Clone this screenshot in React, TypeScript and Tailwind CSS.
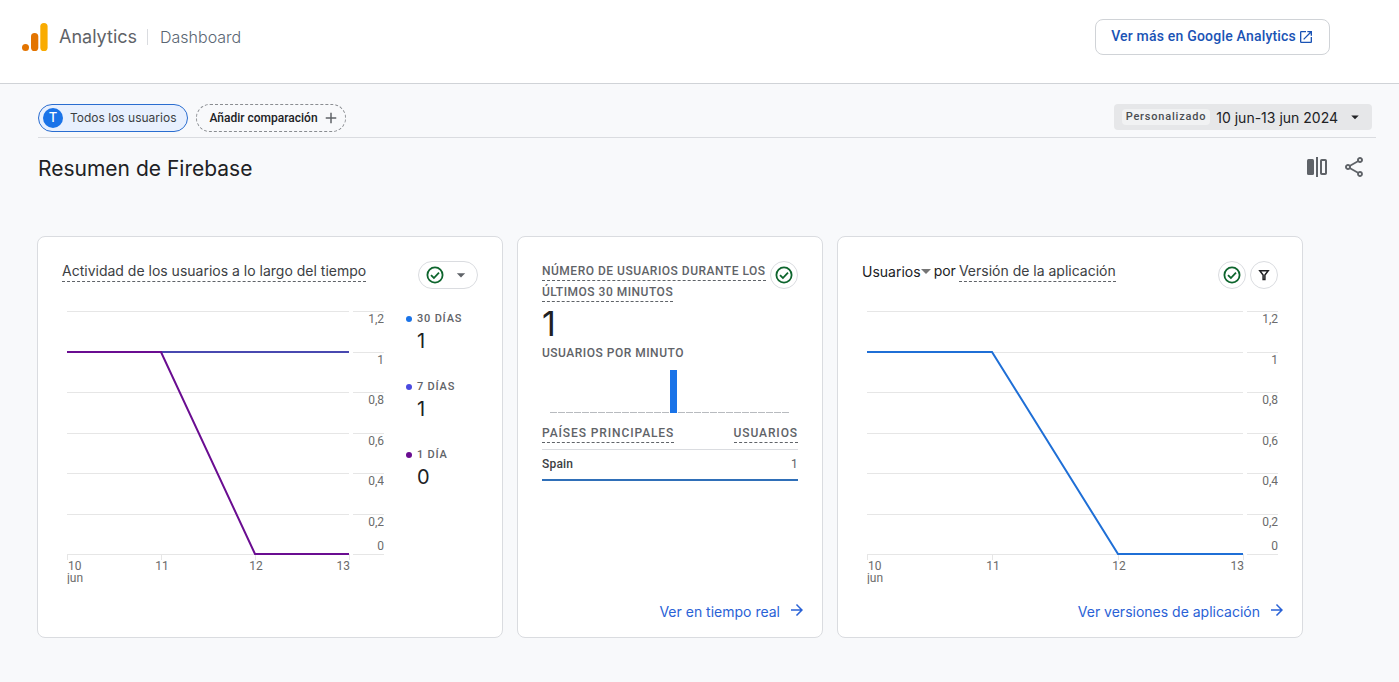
import type { ReactNode } from "react";
import { MdAdd, MdArrowDropDown, MdArrowForward, MdOpenInNew, MdOutlineShare } from "react-icons/md";

type Series = { color: string; values: number[] };

const X_LABELS = ["10", "11", "12", "13"];
const Y_TICKS = [
  { y: 7, label: "1,2", textY: 19 },
  { y: 48, label: "1", textY: 60 },
  { y: 88, label: "0,8", textY: 100 },
  { y: 129, label: "0,6", textY: 141 },
  { y: 169, label: "0,4", textY: 181 },
  { y: 210, label: "0,2", textY: 222 },
  { y: 250, label: "0", textY: 246 },
];

function LineChart({ width, series, label }: { width: number; series: Series[]; label: string }) {
  const left = 5;
  const right = width - 35;
  const xAt = (i: number) => left + Math.round(((right - left) * i) / (X_LABELS.length - 1));
  const yAt = (v: number) => 250 - v * 202;

  return (
    <svg viewBox={`0 0 ${width} 280`} role="img" aria-label={label} className="block h-auto w-full font-[Roboto,sans-serif] text-[12px]">
      <g stroke="#e6e6e6" strokeWidth="1">
        {Y_TICKS.map((t) => (
          <path key={t.y} d={`M${left} ${t.y + 0.5}H${right}M${right + 4} ${t.y + 0.5}H${width}`} />
        ))}
        {X_LABELS.map((x, i) => (
          <path key={x} d={`M${xAt(i) + 0.5} 250v6`} />
        ))}
      </g>
      <g fill="#6b6b6b">
        {Y_TICKS.map((t) => (
          <text key={t.y} x={width} y={t.textY} textAnchor="end">
            {t.label}
          </text>
        ))}
        <text x={left + 1} y="266">10</text>
        <text x={left} y="278">jun</text>
        <text x={xAt(1) + 1} y="266" textAnchor="middle">11</text>
        <text x={xAt(2) + 1} y="266" textAnchor="middle">12</text>
        <text x={right + 1} y="266" textAnchor="end">13</text>
      </g>
      {series.map((s) => (
        <polyline
          key={s.color}
          fill="none"
          stroke={s.color}
          strokeWidth="2"
          points={s.values.map((v, i) => `${xAt(i)},${yAt(v)}`).join(" ")}
        />
      ))}
    </svg>
  );
}

function CheckIcon() {
  return (
    <svg viewBox="0 0 18 18" className="size-[18px]" fill="none" stroke="#0d652d" strokeWidth="1.8" aria-hidden="true">
      <circle cx="9" cy="9" r="7.6" />
      <path d="M5 9.2l2.9 2.8L13 6.600" />
    </svg>
  );
}

function RoundButton({ label, children }: { label: string; children: ReactNode }) {
  return (
    <button type="button" aria-label={label} className="flex size-7 shrink-0 items-center justify-center rounded-full border border-[#dadce0]">
      {children}
    </button>
  );
}

function Card({ children }: { children: ReactNode }) {
  return (
    <section className="flex min-h-[402px] flex-col rounded-lg border border-[#dadce0] bg-white px-6 pt-6 pb-3.5">{children}</section>
  );
}

function CardLink({ children }: { children: ReactNode }) {
  return (
    <a href="#" className="-mr-2 mt-auto flex items-start gap-2 self-end text-[14px] leading-[22px] text-[#2a62d6]">
      {children}
      <MdArrowForward className="size-[18px]" aria-hidden="true" />
    </a>
  );
}

const LEGEND = [
  { name: "30 DÍAS", value: "1", dot: "bg-[#1a73e8]" },
  { name: "7 DÍAS", value: "1", dot: "bg-[#4a4ae0]" },
  { name: "1 DÍA", value: "0", dot: "bg-[#6a0d91]" },
];

export default function App() {
  return (
    <div className="min-h-screen bg-[#f8f9fb] font-[Inter,sans-serif] text-[#202124]">
      <header className="flex h-21 items-center justify-between border-b border-[#d0d3d7] bg-white pb-2.5 pl-[22px] pr-[69px]">
        <div className="flex items-center">
          <svg viewBox="0 0 26 28" className="h-7 w-[26px]" aria-hidden="true">
            <circle cx="3.500" cy="24.500" r="3.500" fill="#e37400" />
            <rect x="9" y="10" width="7.300" height="18" rx="3.600" fill="#e37400" />
            <rect x="18.300" y="0" width="7.300" height="28" rx="3.600" fill="#f9ab00" />
          </svg>
          <span className="ml-[11px] text-[18px] leading-none text-[#5f6368]">Analytics</span>
          <span className="ml-2.5 mr-3 h-4 w-px bg-[#dadce0]" />
          <span className="text-[16px] leading-none font-light text-[#5a6673]">Dashboard</span>
        </div>
        <a href="#" className="flex h-9 items-center gap-0.5 rounded-lg border border-[#d0d3d7] px-[15px] font-[Roboto,sans-serif] text-[14px] font-medium tracking-[0.2px] text-[#1a53b5]">
          Ver más en Google Analytics
          <MdOpenInNew className="size-4" aria-hidden="true" />
        </a>
      </header>

      <main className="pb-11 pl-[37px] pr-[23px] pt-5">
        <div className="ml-px flex items-start justify-between border-b border-[#dadce0] pb-[5px]">
          <div className="flex gap-2">
            <button type="button" className="flex h-7 items-center gap-[7px] rounded-full border border-[#2a6dd0] bg-[#e8f0fe] pl-1 pr-[11px] text-[12px] text-[#3c4043]">
              <span className="flex size-5 items-center justify-center rounded-full bg-[#1a73e8] text-[13px] font-medium text-white">T</span>
              Todos los usuarios
            </button>
            <button type="button" className="flex h-7 items-center gap-1 rounded-full border border-dashed border-[#8a8d91] pl-3 pr-[5px] font-[Roboto,sans-serif] text-[12px] font-medium text-[#202124]">
              Añadir comparación
              <MdAdd className="size-[18px] text-[#5f6368]" aria-hidden="true" />
            </button>
          </div>
          <button type="button" className="mr-1 flex h-[26px] items-center rounded bg-[#e6e7e9] px-2 text-[14px]">
            <span className="mr-1.5 rounded-sm bg-[#f1f2f3] px-1 font-[Roboto,sans-serif] text-[11px] leading-4 font-medium tracking-[0.8px] text-[#4a4d51]">
              Personalizado
            </span>
            10 jun-13 jun 2024
            <MdArrowDropDown className="ml-2 size-[18px]" aria-hidden="true" />
          </button>
        </div>

        <div className="ml-px flex items-center justify-between pr-2.5 pt-[11px]">
          <h1 className="text-[21px] leading-10">Resumen de Firebase</h1>
          <div className="flex items-center gap-3.5 pb-1 text-[#5f6368]">
            <button type="button" aria-label="Comparar">
              <svg viewBox="0 0 22 20" className="h-5 w-[22px]" fill="none" aria-hidden="true">
                <rect x="1" y="2" width="7" height="16" rx="1.500" fill="currentColor" />
                <path d="M11 0v20" stroke="currentColor" strokeWidth="2" />
                <rect x="15" y="3" width="5" height="14" rx="0.800" stroke="currentColor" strokeWidth="2" />
              </svg>
            </button>
            <button type="button" aria-label="Compartir">
              <MdOutlineShare className="size-6" />
            </button>
          </div>
        </div>

        <div className="mt-[47px] grid max-w-[1266px] grid-cols-[466fr_306fr_466fr] gap-3.5">
          <Card>
            <div className="flex items-start justify-between">
              <h2 className="border-b border-dashed border-[#5f6368] text-[14px] leading-5 text-[#3c4043]">Actividad de los usuarios a lo largo del tiempo</h2>
              <button type="button" aria-label="Estado de los datos" className="flex h-7 w-15 items-center justify-between rounded-full border border-[#dadce0] pl-[7px] pr-1.5 text-[#5f6368]">
                <CheckIcon />
                <MdArrowDropDown className="size-5" aria-hidden="true" />
              </button>
            </div>
            <div className="mt-[15px] flex">
              <div className="min-w-0 flex-1">
                <LineChart
                  width={322}
                  label="Actividad de los usuarios"
                  series={[
                    { color: "#4848b0", values: [1, 1, 1, 1] },
                    { color: "#6a0d91", values: [1, 1, 0, 0] },
                  ]}
                />
              </div>
              <ul className="w-[94px] shrink-0 pl-[22px] pt-[7px]">
                {LEGEND.map((item) => (
                  <li key={item.name} className="h-17">
                    <div className="flex items-center gap-[5px] font-[Roboto,sans-serif] text-[11px] leading-4 font-medium tracking-[0.8px] text-[#5f6368]">
                      <span className={`size-1.5 rounded-full ${item.dot}`} />
                      {item.name}
                    </div>
                    <div className="pl-[11px] text-[20px] leading-7">{item.value}</div>
                  </li>
                ))}
              </ul>
            </div>
          </Card>

          <Card>
            <div className="flex items-start justify-between gap-1 font-[Roboto,sans-serif] text-[12px] font-medium tracking-[0.5px] text-[#5f6368]">
              <h2 className="leading-[21px]">
                <span className="border-b border-dashed border-[#5f6368] pb-0.5">NÚMERO DE USUARIOS DURANTE LOS ÚLTIMOS 30 MINUTOS</span>
              </h2>
              <RoundButton label="Estado de los datos">
                <CheckIcon />
              </RoundButton>
            </div>
            <div className="pb-px text-[34px] leading-[42px]">1</div>
            <h3 className="font-[Roboto,sans-serif] text-[12px] leading-[14px] font-medium tracking-[0.5px] text-[#5f6368]">USUARIOS POR MINUTO</h3>
            <svg viewBox="0 0 256 54" role="img" aria-label="Usuarios por minuto" className="mt-2.5 block h-auto w-full">
              <path d="M8 42.500H247" stroke="#b8bbbf" strokeDasharray="7 1" />
              <rect x="128" y="0" width="7" height="43" fill="#1a73e8" />
            </svg>
            <table className="w-full font-[Roboto,sans-serif] text-[12px] leading-[18px] font-medium text-[#5f6368]">
              <thead className="border-b border-[#dadce0] tracking-[0.9px]">
                <tr>
                  <th className="pb-1.5 text-left font-medium"><span className="inline-block border-b border-dashed border-[#5f6368]">PAÍSES PRINCIPALES</span></th>
                  <th className="pb-1.5 text-right font-medium"><span className="inline-block border-b border-dashed border-[#5f6368]">USUARIOS</span></th>
                </tr>
              </thead>
              <tbody className="border-b-2 border-[#2f6fb8] tracking-[0.2px]">
                <tr>
                  <td className="pt-[5px] pb-1.5 text-[#3c4043]">Spain</td>
                  <td className="pt-[5px] pb-1.5 text-right font-normal">1</td>
                </tr>
              </tbody>
            </table>
            <CardLink>Ver en tiempo real</CardLink>
          </Card>

          <Card>
            <div className="flex items-start justify-between">
              <h2 className="flex text-[14px] leading-5">
                <button type="button" className="flex items-center">
                  Usuarios
                  <svg viewBox="0 0 10 5" className="h-[5px] w-2.5" aria-hidden="true">
                    <path d="M0 0h10L5 5z" fill="#757575" />
                  </svg>
                </button>
                <span className="mx-[3px]">por</span>
                <span className="border-b border-dashed border-[#5f6368] text-[#3c4043]">Versión de la aplicación</span>
              </h2>
              <div className="flex gap-1">
                <RoundButton label="Estado de los datos">
                  <CheckIcon />
                </RoundButton>
                <RoundButton label="Filtrar">
                  <svg viewBox="0 0 12 12" className="size-3" fill="none" stroke="#202124" aria-hidden="true">
                    <path d="M1.800 1.700H10.200L6.900 6V10.500H5.100V6z" strokeWidth="1.500" />
                  </svg>
                </RoundButton>
              </div>
            </div>
            <div className="mt-[15px]">
              <LineChart width={416} label="Usuarios por versión de la aplicación" series={[{ color: "#1f6fd6", values: [1, 1, 0, 0] }]} />
            </div>
            <CardLink>Ver versiones de aplicación</CardLink>
          </Card>
        </div>
      </main>
    </div>
  );
}
